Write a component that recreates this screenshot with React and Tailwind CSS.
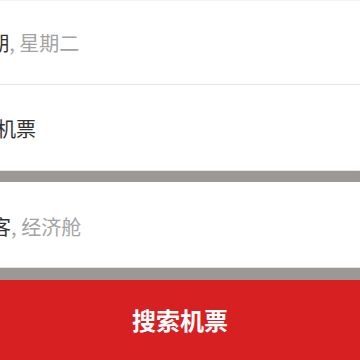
export default function App() {
  const font = { fontFamily: '"Noto Sans CJK SC", "Noto Sans", sans-serif' };

  return (
    <div className="w-[360px] h-[360px] overflow-hidden bg-white flex flex-col" style={font}>
      {/* date row */}
      <div className="h-[85px] shrink-0 border-t border-[#f3f3f5] border-b border-b-[#e4e4ea] flex items-center overflow-hidden">
        <p className="text-[20px] leading-none whitespace-nowrap -ml-[84px] text-[#333333]">
          3月12日期<span className="text-[#a3a3a3]">, 星期二</span>
        </p>
      </div>

      {/* trip type row */}
      <div className="h-[86px] shrink-0 border-b border-[#e4e4ea] flex items-center overflow-hidden">
        <p className="text-[20px] leading-none whitespace-nowrap -ml-[44px] pt-[2px] text-[#333333]">单程机票</p>
      </div>

      <div className="h-[11px] shrink-0 bg-[#9b9896]" />

      {/* passengers row */}
      <div className="h-[86px] shrink-0 border-b border-[#e4e4ea] flex items-center overflow-hidden">
        <p className="text-[20px] leading-none whitespace-nowrap -ml-[60px] pt-[4px] text-[#333333]">
          1位乘客<span className="text-[#a3a3a3]">, 经济舱</span>
        </p>
      </div>

      <div className="h-[12px] shrink-0 bg-[#9b9896]" />

      {/* search button */}
      <button className="flex-1 w-full bg-[#d62022] flex items-center justify-center text-white text-[24px] font-bold">
        搜索机票
      </button>
    </div>
  );
}
